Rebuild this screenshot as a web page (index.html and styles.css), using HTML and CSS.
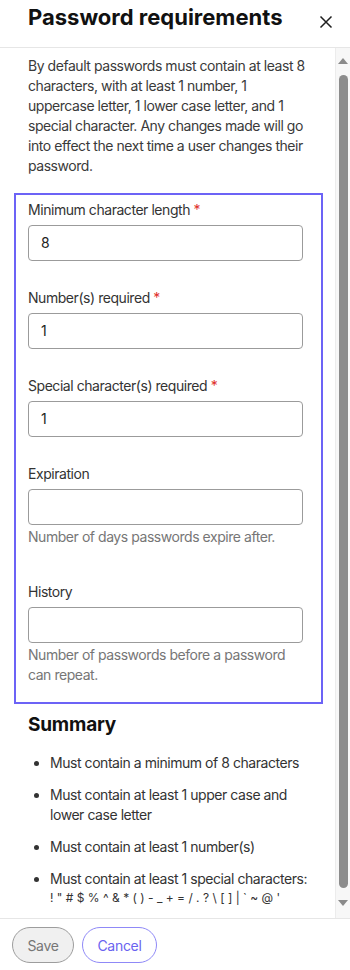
FILE: index.html
```html
<!DOCTYPE html>
<html lang="en">
<head>
<meta charset="utf-8">
<title>Password requirements</title>
<link rel="stylesheet" href="styles.css">
</head>
<body>
<div class="panel">
  <header class="panel-header">
    <h1 class="panel-title">Password requirements</h1>
    <button class="close-btn" aria-label="Close">
      <svg width="14" height="14" viewBox="0 0 14 14"><path d="M1.5 1.5 L12.5 12.5 M12.5 1.5 L1.5 12.5" stroke="#1f1f1f" stroke-width="1.5" fill="none"/></svg>
    </button>
  </header>
  <div class="panel-body">
    <div class="content">
      <p class="intro">By default passwords must contain at least 8<br>characters, with at least 1 number, 1<br>uppercase letter, 1 lower case letter, and 1<br>special character. Any changes made will go<br>into effect the next time a user changes their<br>password.</p>
      <div class="form-box">
        <div class="field">
          <label class="label">Minimum character length <span class="req">*</span></label>
          <div class="input">8</div>
        </div>
        <div class="field">
          <label class="label">Number(s) required <span class="req">*</span></label>
          <div class="input">1</div>
        </div>
        <div class="field">
          <label class="label">Special character(s) required <span class="req">*</span></label>
          <div class="input">1</div>
        </div>
        <div class="field has-help">
          <label class="label">Expiration</label>
          <div class="input"></div>
          <p class="help">Number of days passwords expire after.</p>
        </div>
        <div class="field last">
          <label class="label">History</label>
          <div class="input"></div>
          <p class="help">Number of passwords before a password<br>can repeat.</p>
        </div>
      </div>
      <h2 class="summary-title">Summary</h2>
      <ul class="summary-list">
        <li>Must contain a minimum of 8 characters</li>
        <li>Must contain at least 1 upper case and<br>lower case letter</li>
        <li>Must contain at least 1 number(s)</li>
        <li>Must contain at least 1 special characters: <span class="symbols">! " # $ % ^ &amp; * ( ) - _ + = / . ? \ [ ] | ` ~ @ '</span></li>
      </ul>
    </div>
    <div class="scrollbar">
      <div class="arrow up"></div>
      <div class="thumb"></div>
      <div class="arrow down"></div>
    </div>
  </div>
  <footer class="panel-footer">
    <button class="btn btn-save">Save</button>
    <button class="btn btn-cancel">Cancel</button>
  </footer>
</div>
</body>
</html>
```

FILE: styles.css
```css
* { box-sizing: border-box; }
html, body { margin: 0; padding: 0; background: #fff; }
body {
  font-family: Inter, "Noto Sans", sans-serif;
  color: #333;
  font-size: 14px;
  letter-spacing: -0.45px;
}
.panel {
  width: 350px;
  height: 970px;
  display: flex;
  flex-direction: column;
  overflow: hidden;
}
.panel-header {
  height: 48px;
  flex: none;
  border-bottom: 1px solid #e6e6e6;
  display: flex;
  align-items: flex-start;
  justify-content: space-between;
  padding: 0 17px 0 28px;
}
.panel-title {
  margin: 0;
  padding-top: 3px;
  font-size: 22px;
  line-height: 28px;
  font-weight: 700;
  color: #111;
  letter-spacing: 0;
}
.close-btn {
  border: none;
  background: none;
  padding: 0;
  margin-top: 15px;
  width: 14px;
  height: 14px;
  display: flex;
}
.panel-body {
  height: 870px;
  flex: none;
  display: flex;
  overflow: hidden;
}
.content {
  flex: 1;
  min-width: 0;
  padding-top: 8px;
}
.intro {
  margin: 0 0 17px 28px;
  width: 300px;
  white-space: nowrap;
  line-height: 20px;
  color: #3a3a3a;
}
.form-box {
  margin-left: 14px;
  width: 309px;
  border: 2px solid #6c63f6;
  padding: 5px 18px 17px 12px;
}
.field { margin-bottom: 27px; }
.field.has-help { margin-bottom: 35px; }
.field.last { margin-bottom: 0; }
.label {
  display: block;
  line-height: 20px;
  margin-bottom: 5px;
  color: #333;
}
.req { color: #e0302a; }
.input {
  height: 36px;
  border: 1px solid #9b9b9b;
  border-radius: 4px;
  padding: 0 12px;
  line-height: 34px;
  color: #222;
}
.help {
  margin: 2px 0 0;
  line-height: 20px;
  color: #767676;
  white-space: nowrap;
}
.summary-title {
  margin: 10px 0 17px 28px;
  font-size: 19px;
  line-height: 22px;
  font-weight: 700;
  color: #111;
  letter-spacing: -0.2px;
}
.summary-list {
  margin: 0 0 0 28px;
  padding-left: 22px;
  width: 295px;
  color: #333;
}
.summary-list li {
  line-height: 20px;
  margin-bottom: 12px;
  white-space: nowrap;
}
.symbols {
  display: block;
  font-size: 12px;
  line-height: 17px;
  letter-spacing: 0;
}
.scrollbar {
  width: 15px;
  flex: none;
  background: #f7f7f7;
  border-left: 1px solid #ececec;
  display: flex;
  flex-direction: column;
  align-items: center;
  padding-top: 10px;
}
.arrow {
  width: 0;
  height: 0;
  border-left: 5px solid transparent;
  border-right: 5px solid transparent;
}
.arrow.up { border-bottom: 6px solid #8a8a8a; }
.arrow.down { border-top: 6px solid #8a8a8a; margin-top: 12px; }
.thumb {
  margin-top: 11px;
  width: 9px;
  height: 813px;
  border-radius: 5px;
  background: #8c8c8c;
}
.panel-footer {
  flex: 1;
  border-top: 1px solid #e6e6e6;
  display: flex;
  align-items: flex-start;
  gap: 8px;
  padding: 8px 0 0 12px;
}
.btn {
  height: 36px;
  border-radius: 18px;
  font-family: inherit;
  font-size: 14px;
  letter-spacing: -0.3px;
  padding: 0;
  cursor: pointer;
}
.btn-save {
  width: 62px;
  background: #f0f0f0;
  border: 1px solid #9d9d9d;
  color: #767676;
}
.btn-cancel {
  width: 75px;
  background: #fff;
  border: 1px solid #8f89f7;
  color: #6a63f0;
}
```
